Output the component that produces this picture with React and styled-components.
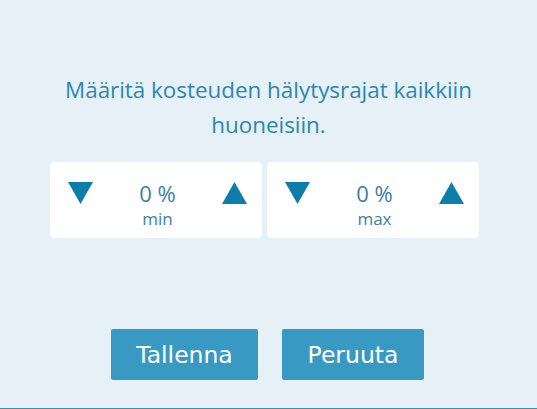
import React from 'react'
import styled, { createGlobalStyle } from 'styled-components'

const GlobalStyle = createGlobalStyle`
  html, body {
    margin: 0;
    padding: 0;
    background: #e5f0f7;
  }
`

const Dialog = styled.div`
  width: 537px;
  height: 409px;
  box-sizing: border-box;
  background: #e5f0f7;
  border-bottom: 1px solid #3e8fae;
  display: flex;
  flex-direction: column;
  align-items: center;
  padding-top: 72px;
  font-family: 'Open Sans', 'Noto Sans', sans-serif;
`

const Title = styled.p`
  margin: 0;
  width: 460px;
  text-align: center;
  font-size: 22.4px;
  line-height: 35px;
  color: #2f86b0;
  font-weight: 400;
`

const Limits = styled.div`
  display: flex;
  gap: 5px;
  margin-top: 20px;
  margin-left: -8px;
`

const Card = styled.div`
  width: 212px;
  height: 76px;
  background: #ffffff;
  border-radius: 4px;
  box-sizing: border-box;
  display: flex;
  align-items: flex-start;
  justify-content: space-between;
  padding: 20px 15px 0 18px;
`

const Arrow = styled.button`
  width: 25px;
  height: 22px;
  padding: 0;
  border: none;
  background: #0d7eab;
  cursor: pointer;
  clip-path: ${(p) =>
    p.$up ? 'polygon(50% 0, 100% 100%, 0 100%)' : 'polygon(0 0, 100% 0, 50% 100%)'};
`

const Value = styled.div`
  display: flex;
  flex-direction: column;
  align-items: center;
  color: #3d7ea3;
  margin-top: -3px;
`

const Percent = styled.span`
  font-size: 22px;
  line-height: 28px;
`

const Label = styled.span`
  font-size: 17px;
  line-height: 24px;
`

const Buttons = styled.div`
  display: flex;
  gap: 24px;
  margin-top: 91px;
  margin-left: -2px;
`

const Button = styled.button`
  width: ${(p) => p.$w}px;
  height: 51px;
  border: none;
  border-radius: 2px;
  background: #389ac2;
  color: #ffffff;
  font-family: 'DejaVu Sans', Verdana, sans-serif;
  font-size: 23.5px;
  cursor: pointer;
`

function LimitCard({ label }) {
  return (
    <Card>
      <Arrow aria-label="vähennä" />
      <Value>
        <Percent>0 %</Percent>
        <Label>{label}</Label>
      </Value>
      <Arrow $up aria-label="lisää" />
    </Card>
  )
}

export default function App() {
  return (
    <>
      <GlobalStyle />
      <Dialog>
        <Title>Määritä kosteuden hälytysrajat kaikkiin huoneisiin.</Title>
        <Limits>
          <LimitCard label="min" />
          <LimitCard label="max" />
        </Limits>
        <Buttons>
          <Button $w={147}>Tallenna</Button>
          <Button $w={142}>Peruuta</Button>
        </Buttons>
      </Dialog>
    </>
  )
}
